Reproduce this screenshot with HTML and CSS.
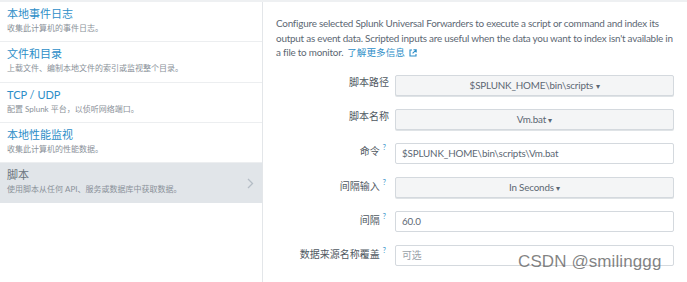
FILE: index.html
```html
<!DOCTYPE html>
<html lang="zh">
<head>
<meta charset="utf-8">
<link rel="stylesheet" href="styles.css">
</head>
<body>
<div class="topstrip"></div>
<div class="page">
  <ul class="sources">
    <li class="src">
      <div class="src-title">本地事件日志</div>
      <div class="src-desc">收集此计算机的事件日志。</div>
    </li>
    <li class="src">
      <div class="src-title">文件和目录</div>
      <div class="src-desc">上载文件、编制本地文件的索引或监视整个目录。</div>
    </li>
    <li class="src">
      <div class="src-title">TCP / UDP</div>
      <div class="src-desc">配置 Splunk 平台，以侦听网络端口。</div>
    </li>
    <li class="src">
      <div class="src-title">本地性能监视</div>
      <div class="src-desc">收集此计算机的性能数据。</div>
    </li>
    <li class="src src-active">
      <div class="src-title">脚本</div>
      <div class="src-desc">使用脚本从任何 API、服务或数据库中获取数据。</div>
      <svg class="chev" width="7" height="11" viewBox="0 0 7 11"><path d="M1 1l4.5 4.5L1 10" fill="none" stroke="#b5bdc6" stroke-width="1.3"/></svg>
    </li>
  </ul>
  <main class="detail">
    <p class="intro">Configure selected Splunk Universal Forwarders to execute a script or command and index its output as event data. Scripted inputs are useful when the data you want to index isn't available in a file to monitor.<a class="more">了解更多信息 <svg class="ext" width="8" height="8" viewBox="0 0 8 8"><path d="M3 1H1v6h6V5" fill="none" stroke="#2d8ec8" stroke-width="1.1"/><path d="M4.5 0.8H7.2v2.7M7.2 0.8L3.6 4.4" fill="none" stroke="#2d8ec8" stroke-width="1.1"/></svg></a></p>
    <div class="form">
      <label class="lbl">脚本路径</label>
      <div class="ctl select">$SPLUNK_HOME\bin\scripts <span class="caret">▾</span></div>

      <label class="lbl">脚本名称</label>
      <div class="ctl select">Vm.bat <span class="caret">▾</span></div>

      <label class="lbl">命令<sup class="q">?</sup></label>
      <div class="ctl text">$SPLUNK_HOME\bin\scripts\Vm.bat</div>

      <label class="lbl">间隔输入<sup class="q">?</sup></label>
      <div class="ctl select">In Seconds <span class="caret">▾</span></div>

      <label class="lbl">间隔<sup class="q">?</sup></label>
      <div class="ctl text">60.0</div>

      <label class="lbl">数据来源名称覆盖<sup class="q">?</sup></label>
      <div class="ctl text placeholder">可选</div>
    </div>
  </main>
</div>
<div class="watermark">CSDN @smilinggg</div>
</body>
</html>
```

FILE: styles.css
```css
* { box-sizing: border-box; }
html, body { margin: 0; padding: 0; background: #fff; }
body {
  width: 687px;
  height: 282px;
  overflow: hidden;
  position: relative;
  font-family: Lato, "Noto Sans CJK SC", sans-serif;
  color: #5c6773;
}
.topstrip { height: 2px; background: #eef0f2; }
.page { display: flex; height: 280px; }
.sources {
  list-style: none;
  margin: 0;
  padding: 0;
  width: 263px;
  flex: none;
  border-right: 1px solid #e3e6e9;
}
.src {
  position: relative;
  height: 40.3px;
  padding: 5px 7px 0;
  border-bottom: 1px solid #eceef0;
}
.src-title {
  font-size: 11px;
  line-height: 14px;
  color: #2d8ec8;
}
.src-desc {
  font-size: 8px;
  line-height: 14px;
  color: #8a9199;
}
.src-active { background: #e1e5e9; border-bottom-color: #e1e5e9; }
.src-active .src-title { color: #6b747d; }
.chev { position: absolute; right: 8px; top: 15px; }

.detail { flex: 1; padding: 14px 13px 0 13px; }
.intro {
  margin: 0;
  font-size: 9.9px;
  letter-spacing: -0.22px;
  line-height: 14.5px;
  color: #5c6773;
}
.more {
  margin-left: 4px;
  color: #2d8ec8;
  font-family: "Noto Sans CJK SC", sans-serif;
  font-size: 9.6px;
  line-height: 1;
  letter-spacing: 0;
}
.ext { margin-left: 2px; vertical-align: -0.5px; }

.form {
  margin-top: 15px;
  display: grid;
  grid-template-columns: 113px 279px;
  column-gap: 6px;
  row-gap: 12.6px;
  align-items: center;
}
.lbl {
  text-align: right;
  font-size: 10px;
  line-height: 14px;
  color: #4f5861;
  font-family: "Noto Sans CJK SC", sans-serif;
  padding-right: 3px;
  margin-top: -4px;
}
.lbl .q {
  font-family: Lato, sans-serif;
  font-size: 7px;
  color: #2d8ec8;
  margin-left: 3px;
  vertical-align: 5px;
  line-height: 0;
}
.lbl:not(:has(.q)) { padding-right: 0; margin-top: -6px; }
.ctl {
  height: 21.5px;
  border: 1px solid #d4d9de;
  border-radius: 2px;
  font-size: 9.8px;
  letter-spacing: -0.15px;
  line-height: 19.5px;
  color: #5c6773;
}
.select {
  background: #f4f5f6;
  text-align: center;
  box-shadow: 0 1px 0 #dfe3e6;
}
.caret { font-size: 8px; }
.text { background: #fff; padding-left: 6px; }
.placeholder { color: #9aa1a8; font-family: "Noto Sans CJK SC", sans-serif; }

.watermark {
  position: absolute;
  left: 518px;
  top: 252px;
  font-family: "Liberation Sans", Arial, sans-serif;
  font-size: 17px;
  color: rgba(90, 90, 90, 0.75);
  letter-spacing: 0.1px;
}
```
